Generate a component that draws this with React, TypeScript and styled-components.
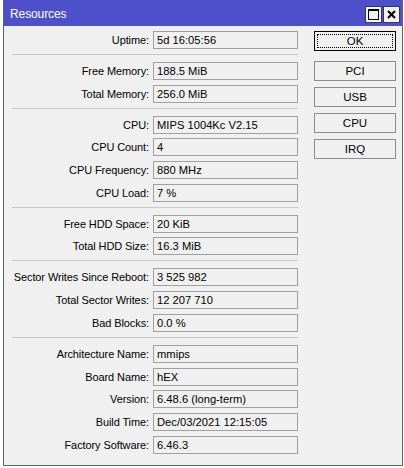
import styled, { createGlobalStyle } from 'styled-components'

const GlobalStyle = createGlobalStyle`
  html, body {
    margin: 0;
    padding: 0;
    background: #ffffff;
  }
  body {
    font-family: "Liberation Sans", Arial, sans-serif;
    font-size: 11px;
    color: #000;
  }
`

const Page = styled.div`
  display: flex;
  width: 404px;
  height: 468px;
  overflow: hidden;
`

const Gutter = styled.div`
  width: 3px;
  background: #ffffff;
`

const Window = styled.div`
  width: 398px;
  height: 465px;
  border: 1px solid #646464;
  border-top: none;
  background: #f0f0f0;
  display: flex;
  flex-direction: column;
`

const TitleBar = styled.div`
  height: 26px;
  background: #4e50c9;
  display: flex;
  align-items: center;
  justify-content: space-between;
  padding: 0 2px 0 6px;
  color: #fff;
  font-size: 12px;
`

const TitleText = styled.span`
  padding-top: 2px;
  letter-spacing: -0.1px;
`

const TitleButtons = styled.div`
  display: flex;
  gap: 1px;
  padding-top: 3px;
`

const TitleButton = styled.div`
  width: 15px;
  height: 15px;
  background: #f0f0f0;
  border: 1px solid #3a3a3a;
  display: flex;
  align-items: center;
  justify-content: center;
`

const Body = styled.div`
  display: flex;
  flex: 1;
  padding: 5px 0 0 8px;
  gap: 16px;
`

const Fields = styled.div`
  display: flex;
  flex-direction: column;
  width: 286px;
`

const Section = styled.div`
  display: flex;
  flex-direction: column;
  gap: 4.7px;
`

const Separator = styled.div`
  height: 1px;
  background: #c8c8c8;
  margin: 5px 0 7px 0;
  width: 286px;
`

const Row = styled.div`
  display: flex;
  align-items: center;
  height: 18px;
`

const Label = styled.div`
  width: 139px;
  text-align: right;
  padding-right: 4px;
  white-space: nowrap;
  font-size: 11px;
  letter-spacing: -0.1px;
`

const Field = styled.div`
  box-sizing: border-box;
  width: 147px;
  height: 18px;
  border: 1px solid #a0a0a0;
  background: #f0f0f0;
  padding: 0 0 0 3px;
  line-height: 16px;
  white-space: nowrap;
  font-size: 11.2px;
  color: #000;
`

const Buttons = styled.div`
  display: flex;
  flex-direction: column;
  gap: 6px;
`

const Button = styled.div<{ $default?: boolean }>`
  box-sizing: border-box;
  width: 82px;
  height: 20px;
  display: flex;
  align-items: center;
  justify-content: center;
  font-size: 11.5px;
  background: #f0f0f0;
  border: 1px solid ${(p) => (p.$default ? '#000' : '#8c8c8c')};
  outline: ${(p) => (p.$default ? '1px dotted #000' : 'none')};
  outline-offset: -4px;
  margin-bottom: ${(p) => (p.$default ? '4px' : '0')};
`

type Item = { label: string; value: string }

const sections: Item[][] = [
  [{ label: 'Uptime', value: '5d 16:05:56' }],
  [
    { label: 'Free Memory', value: '188.5 MiB' },
    { label: 'Total Memory', value: '256.0 MiB' },
  ],
  [
    { label: 'CPU', value: 'MIPS 1004Kc V2.15' },
    { label: 'CPU Count', value: '4' },
    { label: 'CPU Frequency', value: '880 MHz' },
    { label: 'CPU Load', value: '7 %' },
  ],
  [
    { label: 'Free HDD Space', value: '20 KiB' },
    { label: 'Total HDD Size', value: '16.3 MiB' },
  ],
  [
    { label: 'Sector Writes Since Reboot', value: '3 525 982' },
    { label: 'Total Sector Writes', value: '12 207 710' },
    { label: 'Bad Blocks', value: '0.0 %' },
  ],
  [
    { label: 'Architecture Name', value: 'mmips' },
    { label: 'Board Name', value: 'hEX' },
    { label: 'Version', value: '6.48.6 (long-term)' },
    { label: 'Build Time', value: 'Dec/03/2021 12:15:05' },
    { label: 'Factory Software', value: '6.46.3' },
  ],
]

const App = () => {
  return (
    <>
      <GlobalStyle />
      <Page>
        <Gutter />
        <Window>
          <TitleBar>
            <TitleText>Resources</TitleText>
            <TitleButtons>
              <TitleButton>
                <svg width="11" height="11" viewBox="0 0 11 11">
                  <rect x="0.5" y="0.5" width="10" height="10" fill="none" stroke="#000" />
                  <rect x="0" y="0" width="11" height="2" fill="#000" />
                </svg>
              </TitleButton>
              <TitleButton>
                <svg width="9" height="9" viewBox="0 0 9 9">
                  <path d="M1 1 L8 8 M8 1 L1 8" stroke="#000" strokeWidth="2" />
                </svg>
              </TitleButton>
            </TitleButtons>
          </TitleBar>
          <Body>
            <Fields>
              {sections.map((items, i) => (
                <div key={i}>
                  {i > 0 && <Separator />}
                  <Section>
                    {items.map((it) => (
                      <Row key={it.label}>
                        <Label>{it.label}:</Label>
                        <Field>{it.value}</Field>
                      </Row>
                    ))}
                  </Section>
                </div>
              ))}
            </Fields>
            <Buttons>
              <Button $default>OK</Button>
              <Button>PCI</Button>
              <Button>USB</Button>
              <Button>CPU</Button>
              <Button>IRQ</Button>
            </Buttons>
          </Body>
        </Window>
      </Page>
    </>
  )
}

export default App
